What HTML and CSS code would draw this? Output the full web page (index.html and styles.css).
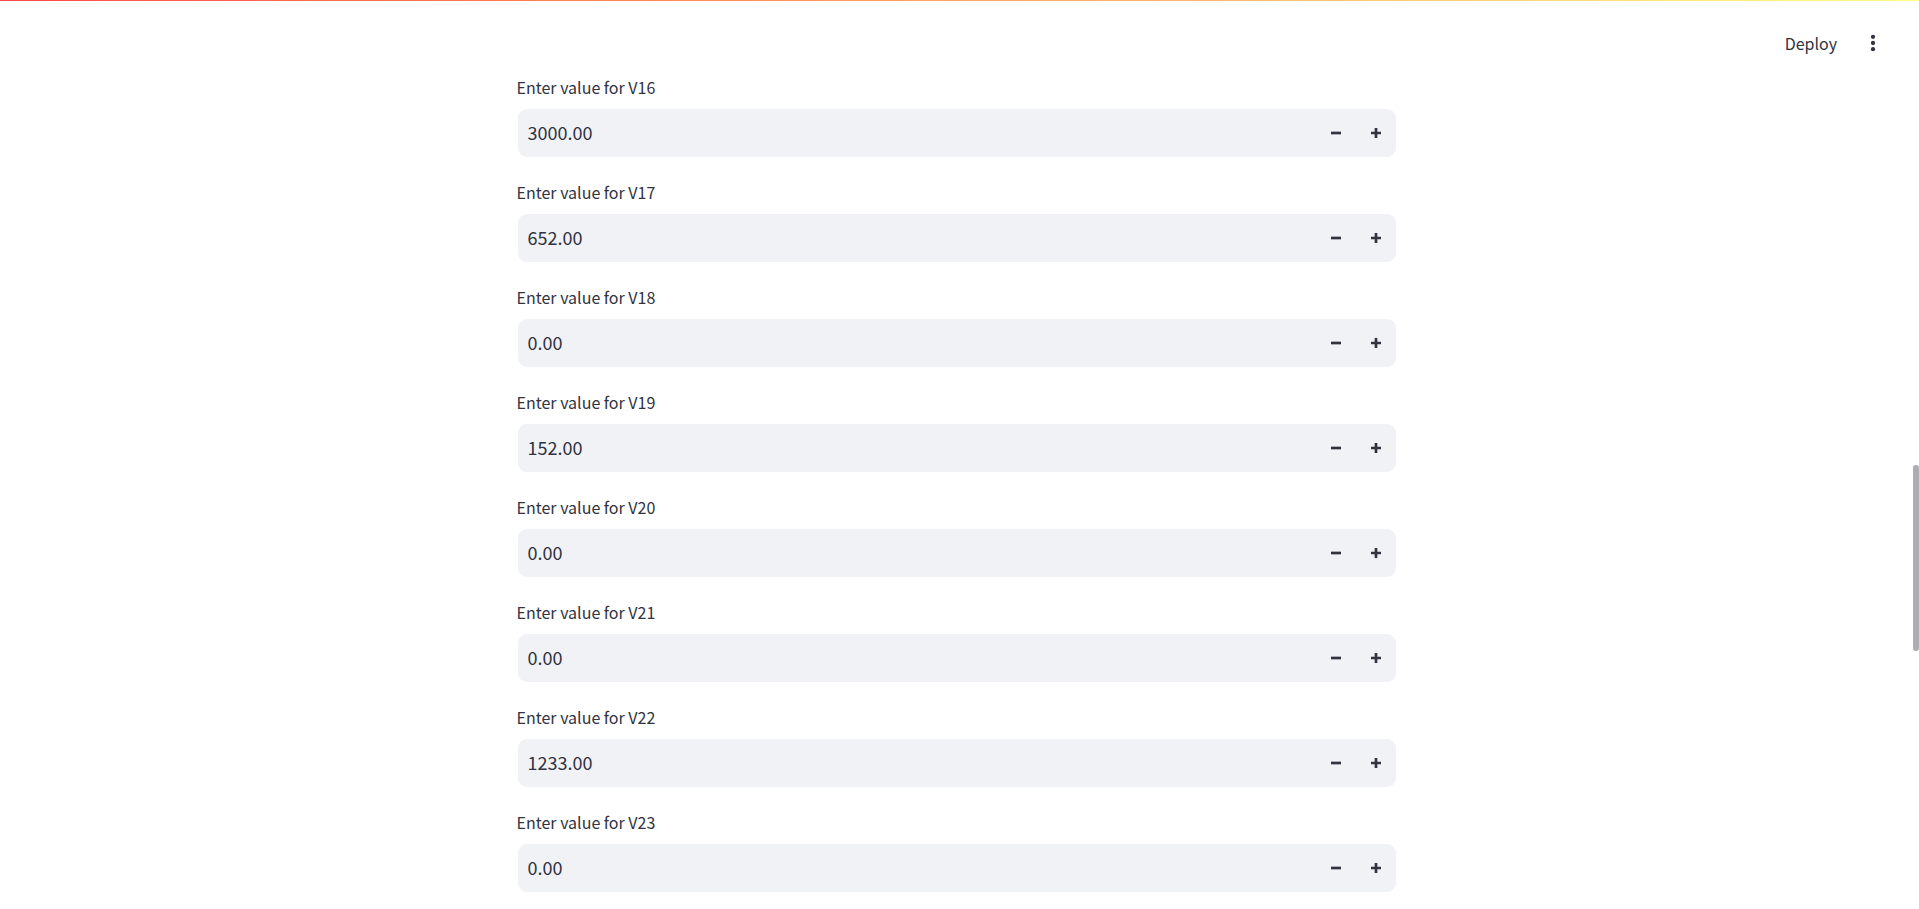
FILE: index.html
```html
<!DOCTYPE html>
<html lang="en">
<head>
<meta charset="utf-8">
<meta name="viewport" content="width=device-width, initial-scale=1">
<title>Enter values</title>
<link rel="stylesheet" href="styles.css">
</head>
<body>
<div class="decoration"></div>
<header class="toolbar">
  <button class="deploy" type="button">Deploy</button>
  <button class="menu" type="button" aria-label="Main menu">
    <svg width="6" height="18" viewBox="0 0 6 18" fill="currentColor" aria-hidden="true"><circle cx="3" cy="2.8" r="2.15"/><circle cx="3" cy="9" r="2.15"/><circle cx="3" cy="15.2" r="2.15"/></svg>
  </button>
</header>
<main class="content">
  <form class="form" id="form"></form>
</main>
<div class="scrollbar"></div>
<template id="field">
  <div class="field">
    <label class="label"></label>
    <div class="number">
      <input class="input" type="text" inputmode="decimal">
      <button class="step" type="button" aria-label="Decrease"><svg width="10" height="10" viewBox="0 0 10 10" aria-hidden="true"><path d="M0 5h10" stroke="currentColor" stroke-width="2.7"/></svg></button>
      <button class="step" type="button" aria-label="Increase"><svg width="10" height="10" viewBox="0 0 10 10" aria-hidden="true"><path d="M0 5h10M5 0v10" stroke="currentColor" stroke-width="2.7"/></svg></button>
    </div>
  </div>
</template>
<script src="script.js"></script>
</body>
</html>
```
FILE: styles.css
```css
* {
  box-sizing: border-box;
}

body {
  margin: 0;
  height: 100vh;
  overflow: hidden;
  background: #fff;
  color: #31333f;
  font-family: "Noto Sans CJK SC", "Noto Sans", sans-serif;
}

button,
input {
  padding: 0;
  border: 0;
  background: none;
  color: inherit;
  font-family: inherit;
}

.decoration {
  height: 1px;
  background: linear-gradient(90deg, #ff4b4b, #fffd80);
}

.toolbar {
  display: flex;
  justify-content: flex-end;
  align-items: center;
  gap: 16px;
  height: 72px;
  padding: 11px 26px 0 0;
}

.deploy {
  font-size: 16px;
  line-height: 24px;
}

.menu {
  display: flex;
  align-items: center;
  justify-content: center;
  width: 40px;
  height: 40px;
}

.content {
  padding: 0 6px 0 0;
}

.form {
  display: flex;
  flex-direction: column;
  gap: 20px;
  max-width: 880px;
  margin: 0 auto;
}

.label {
  display: block;
  margin-bottom: 7px;
  font-size: 16px;
  line-height: 28px;
}

.number {
  display: flex;
  height: 50px;
  border: 1px solid transparent;
  border-radius: 10px;
  background: #f0f2f6 padding-box;
}

.input {
  flex: 1;
  min-width: 0;
  padding: 0 0 2px 10px;
  font-size: 18px;
  outline: 0;
}

.step {
  display: flex;
  align-items: center;
  justify-content: center;
  width: 40px;
}

.scrollbar {
  position: fixed;
  top: 465px;
  right: 0;
  width: 6px;
  height: 186px;
  border-radius: 3px;
  background: #adadb2;
}
```
FILE: script.js
```js
const values = {
  V16: "3000.00",
  V17: "652.00",
  V18: "0.00",
  V19: "152.00",
  V20: "0.00",
  V21: "0.00",
  V22: "1233.00",
  V23: "0.00",
};

const form = document.getElementById("form");
const template = document.getElementById("field");

for (const [name, value] of Object.entries(values)) {
  const field = template.content.cloneNode(true);
  const label = field.querySelector(".label");
  const input = field.querySelector(".input");
  const [down, up] = field.querySelectorAll(".step");
  label.textContent = "Enter value for " + name;
  label.htmlFor = name;
  input.id = name;
  input.value = value;
  const step = (by) => {
    input.value = (Number(input.value) + by).toFixed(2);
  };
  down.addEventListener("click", () => step(-0.01));
  up.addEventListener("click", () => step(0.01));
  form.append(field);
}
```
